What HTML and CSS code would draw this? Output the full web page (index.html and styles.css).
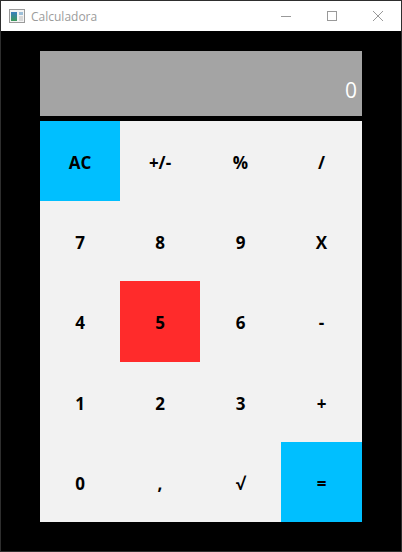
FILE: index.html
```
<!DOCTYPE html>
<html lang="pt">
<head>
<meta charset="utf-8">
<title>Calculadora</title>
<link rel="stylesheet" href="styles.css">
</head>
<body>
<div class="window">
  <div class="titlebar">
    <div class="title">
      <svg class="app-icon" width="16" height="14" viewBox="0 0 16 14">
        <defs>
          <linearGradient id="g" x1="0" y1="0" x2="0" y2="1">
            <stop offset="0" stop-color="#3a7fc0"/>
            <stop offset="1" stop-color="#3d9a5a"/>
          </linearGradient>
        </defs>
        <rect x="0.5" y="0.5" width="15" height="13" fill="#f4f4f4" stroke="#9a9a9a"/>
        <rect x="2" y="3" width="6" height="9" fill="url(#g)"/>
        <rect x="10" y="3" width="4" height="3" fill="#9dbfd8"/>
        <rect x="10" y="7" width="4" height="5" fill="#d8d8d8"/>
      </svg>
      <span class="title-text">Calculadora</span>
    </div>
    <div class="controls">
      <svg class="ctl" width="46" height="30" viewBox="0 0 46 30"><path d="M18 15.5h10" stroke="#999" stroke-width="1"/></svg>
      <svg class="ctl" width="46" height="30" viewBox="0 0 46 30"><rect x="18.5" y="10.5" width="9" height="9" fill="none" stroke="#999"/></svg>
      <svg class="ctl" width="46" height="30" viewBox="0 0 46 30"><path d="M18 10l10 10M28 10l-10 10" stroke="#999" stroke-width="1"/></svg>
    </div>
  </div>
  <div class="content">
    <div class="display">0</div>
    <div class="keys">
      <div class="key blue">AC</div>
      <div class="key">+/-</div>
      <div class="key">%</div>
      <div class="key">/</div>
      <div class="key">7</div>
      <div class="key">8</div>
      <div class="key">9</div>
      <div class="key">X</div>
      <div class="key">4</div>
      <div class="key red">5</div>
      <div class="key">6</div>
      <div class="key">-</div>
      <div class="key">1</div>
      <div class="key">2</div>
      <div class="key">3</div>
      <div class="key">+</div>
      <div class="key">0</div>
      <div class="key">,</div>
      <div class="key">√</div>
      <div class="key blue">=</div>
    </div>
  </div>
</div>
</body>
</html>
```
FILE: styles.css
```
html, body {
  margin: 0;
  padding: 0;
  background: #000;
}
.window {
  width: 402px;
  height: 552px;
  box-sizing: border-box;
  border: 1px solid #2e2e2e;
  display: flex;
  flex-direction: column;
  font-family: "Open Sans", "Noto Sans", sans-serif;
}
.titlebar {
  height: 30px;
  background: #fff;
  display: flex;
  justify-content: space-between;
  align-items: center;
}
.title {
  display: flex;
  align-items: center;
  padding-left: 8px;
  gap: 6px;
}
.app-icon {
  display: block;
}
.title-text {
  font-size: 12px;
  color: #9b9b9b;
}
.controls {
  display: flex;
  height: 30px;
}
.ctl {
  display: block;
}
.content {
  flex: 1;
  background: #000;
  padding: 20px 39px 29px 39px;
  display: flex;
  flex-direction: column;
  gap: 5px;
}
.display {
  height: 65px;
  background: #a4a4a4;
  color: #fff;
  font-size: 21px;
  display: flex;
  align-items: center;
  justify-content: flex-end;
  padding: 12px 5px 0 0;
  box-sizing: border-box;
}
.keys {
  flex: 1;
  background: #f2f2f2;
  display: grid;
  grid-template-columns: 80px 80px 81px 81px;
  grid-template-rows: repeat(5, 1fr);
}
.key {
  display: flex;
  align-items: center;
  justify-content: center;
  padding-top: 3px;
  font-weight: 700;
  font-size: 17px;
  color: #000;
}
.blue {
  background: #00bfff;
}
.red {
  background: #ff2b2b;
}
```
